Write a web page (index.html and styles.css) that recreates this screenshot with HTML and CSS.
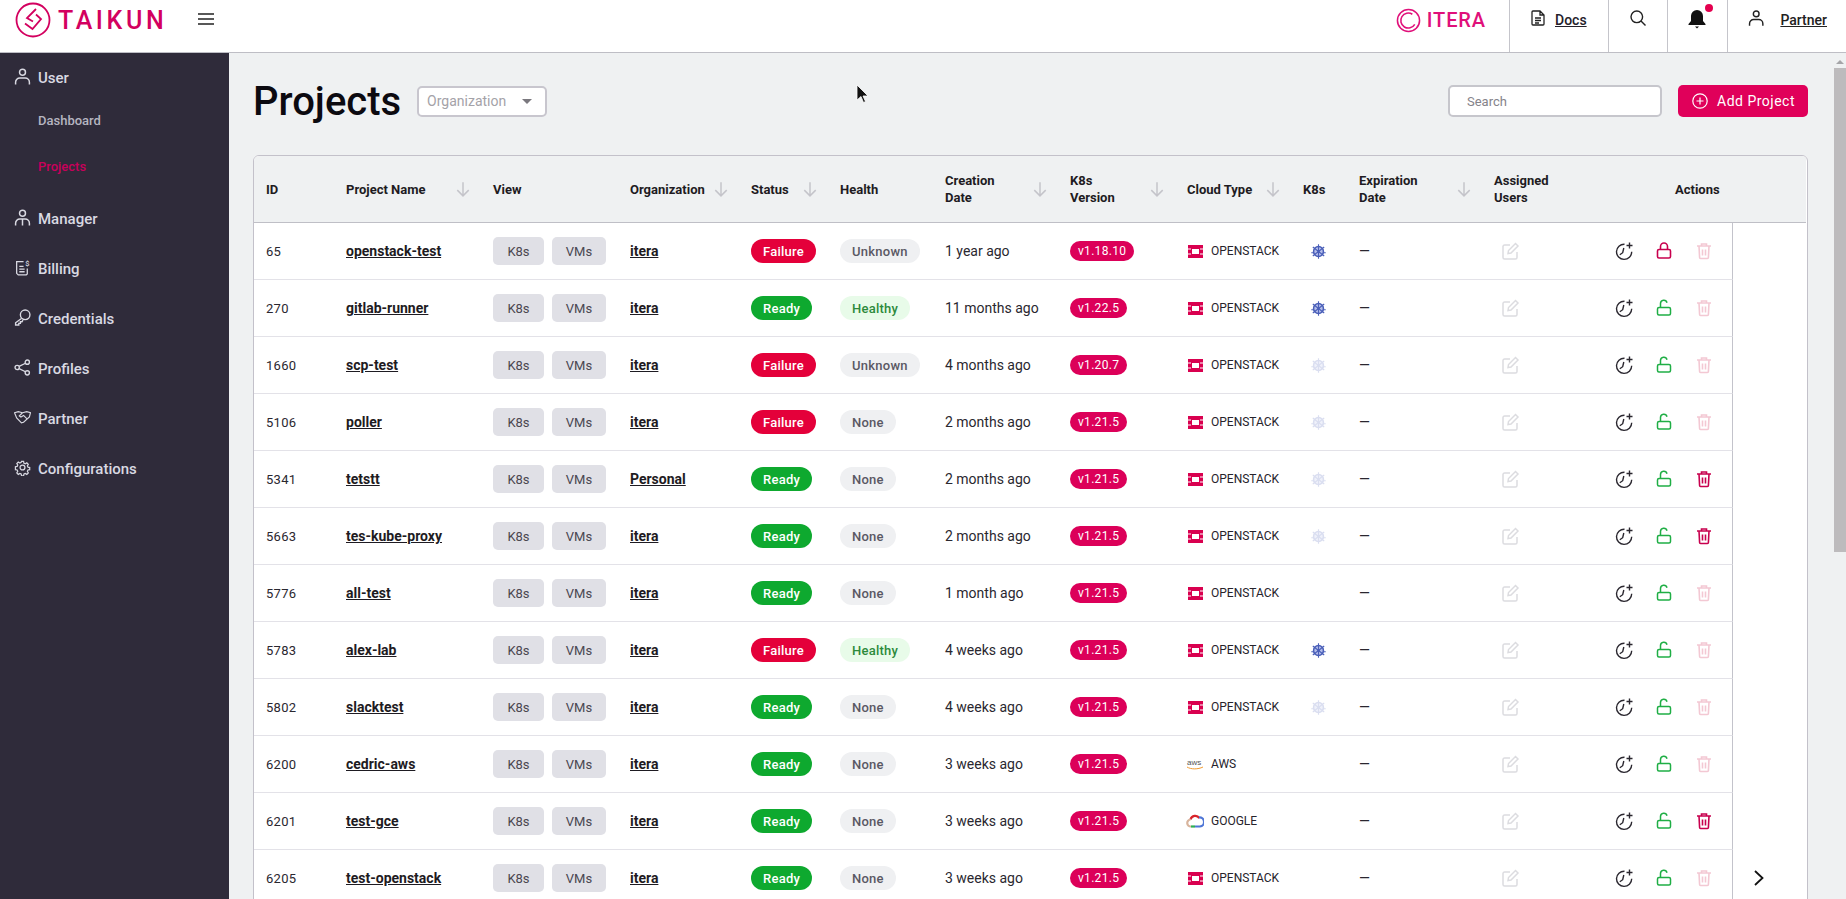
FILE: index.html
```html
<!DOCTYPE html>
<html lang="en">
<head>
    <meta charset="UTF-8">
    <title>Projects - Taikun</title>
    <link rel="stylesheet" href="styles.css">
</head>
<body>
    <!-- shared icons -->
    <svg class="defs" width="0" height="0">
        <symbol id="i-arrow" viewBox="0 0 14 14"><path d="M7 1v12M2 8l5 5 5-5" fill="none" stroke="currentColor" stroke-width="1.300"/></symbol>
        <symbol id="i-clock" viewBox="0 0 20 20"><path d="M10.5 3.2a7.6 7.6 0 1 0 7.2 7.6M9.8 7 8.7 11.7 5.8 13.8" fill="none" stroke="currentColor" stroke-width="1.4"/><path d="M15.5 1.5v6M12.5 4.500h6" fill="none" stroke="currentColor" stroke-width="1.4"/></symbol>
        <symbol id="i-lock" viewBox="0 0 20 20"><rect x="3.500" y="8.500" width="13" height="8.500" rx="1.500" fill="none" stroke="currentColor" stroke-width="1.600"/><path d="M6.500 8.500V5.500a3.500 3.500 0 0 1 7 0v3" fill="none" stroke="currentColor" stroke-width="1.600"/></symbol>
        <symbol id="i-unlock" viewBox="0 0 20 20"><rect x="3.500" y="9.500" width="13" height="7.500" rx="1.500" fill="none" stroke="currentColor" stroke-width="1.500"/><path d="M6.500 9.500V5.500a3.300 3.300 0 0 1 6.500-.8" fill="none" stroke="currentColor" stroke-width="1.500"/></symbol>
        <symbol id="i-trash" viewBox="0 0 20 20"><path d="M3 5h14M7.500 5V3h5v2M5 5l.6 11.500a1 1 0 0 0 1 1h6.800a1 1 0 0 0 1-1L15 5M8.500 8.500v6M11.500 8.500v6" fill="none" stroke="currentColor" stroke-width="1.600"/></symbol>
        <symbol id="i-edit" viewBox="0 0 20 20"><path d="M10 4H4.500A1.500 1.500 0 0 0 3 5.500v11A1.500 1.500 0 0 0 4.500 18h11a1.500 1.500 0 0 0 1.500-1.500V11" fill="none" stroke="currentColor" stroke-width="1.500"/><path d="M8 12.500 8.500 9.500 15.500 2.500 18 5 11 12z" fill="none" stroke="currentColor" stroke-width="1.500"/></symbol>
        <symbol id="i-k8s" viewBox="0 0 20 20"><circle cx="10" cy="10" r="5.800" fill="#b4bdea" stroke="#4a5fb8" stroke-width="1.800"/><path d="M10 1.500V18.500M3.300 4.700 16.700 15.300M16.700 4.700 3.300 15.300M1.500 11.500H4.500M15.500 11.500H18.500" stroke="#4a5fb8" stroke-width="1.300"/><circle cx="10" cy="10" r="1.500" fill="#4a5fb8"/></symbol>
        <symbol id="i-openstack" viewBox="0 0 15 13"><path d="M0 0h15v13H0z" fill="#d9004f"/><path d="M4 4h7v5H4z" fill="#fff"/><path d="M0 3.500h3v1H0zM12 3.500h3v1h-3zM0 8.500h3v1H0zM12 8.500h3v1h-3z" fill="#fff"/></symbol>
        <symbol id="i-user" viewBox="0 0 16 16"><circle cx="8" cy="4" r="2.800" fill="none" stroke="currentColor" stroke-width="1.400"/><path d="M1.500 15.500v-2a4 4 0 0 1 4-4h5a4 4 0 0 1 4 4v2" fill="none" stroke="currentColor" stroke-width="1.400"/></symbol>
    </svg>

    <header class="topbar">
        <div class="brand">
            <svg class="brand-mark" viewBox="0 0 36 36" width="36" height="36">
                <circle cx="18" cy="18" r="16.500" fill="none" stroke="#d3005f" stroke-width="1.800"/>
                <path d="M21 7 12 16 18 19.500M10 21.500 17.500 27 26 17 21 12.500" fill="none" stroke="#d3005f" stroke-width="1.800"/>
            </svg>
            <span class="brand-name">TAIKUN</span>
        </div>
        <button class="menu-btn" type="button" aria-label="Menu">
            <svg viewBox="0 0 16 12" width="16" height="12"><path d="M0 1h16M0 6h16M0 11h16" stroke="#222" stroke-width="1.500"/></svg>
        </button>
        <div class="topbar-right">
            <div class="partner-logo">
                <svg viewBox="0 0 26 26" width="25" height="25">
                    <circle cx="13" cy="13" r="11.500" fill="none" stroke="#e0107a" stroke-width="1.600"/>
                    <path d="M17 6.500a7.800 7.800 0 1 0 2.500 10.500" fill="none" stroke="#e0107a" stroke-width="1.600"/>
                </svg>
                <span class="partner-name">ITERA</span>
            </div>
            <div class="top-cell cell-docs">
                <svg viewBox="0 0 14 16" width="14" height="16"><path d="M1 2a1 1 0 0 1 1-1h7l4 4v9a1 1 0 0 1-1 1H2a1 1 0 0 1-1-1zM9 1v4h4M4 8h6M4 10.500h6M4 13h4" fill="none" stroke="#222" stroke-width="1.300"/></svg>
                <a href="#">Docs</a>
            </div>
            <div class="top-cell cell-search">
                <svg viewBox="0 0 16 16" width="16" height="16"><circle cx="6.800" cy="6.800" r="5.800" fill="none" stroke="#222" stroke-width="1.400"/><path d="M11 11l4.500 4.500" stroke="#222" stroke-width="1.400"/></svg>
            </div>
            <div class="top-cell cell-bell">
                <svg viewBox="0 0 18 19" width="18" height="19"><path d="M9 0a6 6 0 0 1 6 6v5l2.500 3v1H.5v-1L3 11V6a6 6 0 0 1 6-6zM7 16.500h4L9 18.500z" fill="#111"/></svg>
                <span class="bell-dot"></span>
            </div>
            <div class="top-cell cell-user">
                <svg class="top-user" width="18" height="18"><use href="#i-user"/></svg>
                <a href="#">Partner</a>
            </div>
        </div>
    </header>

    <div class="layout">
        <nav class="sidebar">
            <a class="nav-head" href="#"><svg class="nav-icon" width="17" height="17"><use href="#i-user"/></svg>User</a>
            <div class="nav-sub">
                <a href="#">Dashboard</a>
                <a class="active" href="#">Projects</a>
            </div>
            <a class="nav-head" href="#">
                <svg class="nav-icon" viewBox="0 0 16 16" width="17" height="17"><circle cx="8" cy="4" r="2.800" fill="none" stroke="currentColor" stroke-width="1.400"/><path d="M1.500 15.500v-2a4 4 0 0 1 4-4h5a4 4 0 0 1 4 4v2M8 9.500v6" fill="none" stroke="currentColor" stroke-width="1.400"/></svg>Manager</a>
            <a class="nav-head" href="#">
                <svg class="nav-icon" viewBox="0 0 16 16" width="17" height="17"><path d="M9 2.500H2.500v11l1.500 1.500h7.500l1-1V9M5 7h4M5 9.500h5M5 12h5" fill="none" stroke="currentColor" stroke-width="1.200"/><text x="10.500" y="6.500" class="nav-dollar">$</text></svg>Billing</a>
            <a class="nav-head" href="#">
                <svg class="nav-icon" viewBox="0 0 16 16" width="17" height="17"><circle cx="10.500" cy="5.500" r="4.500" fill="none" stroke="currentColor" stroke-width="1.300"/><path d="M7 9 1.500 13v2h3v-1.500H6V12h1.500l1-1.500" fill="none" stroke="currentColor" stroke-width="1.300"/></svg>Credentials</a>
            <a class="nav-head" href="#">
                <svg class="nav-icon" viewBox="0 0 16 16" width="17" height="17"><circle cx="3" cy="8" r="2" fill="none" stroke="currentColor" stroke-width="1.300"/><circle cx="12.500" cy="3" r="2" fill="none" stroke="currentColor" stroke-width="1.300"/><circle cx="12.500" cy="13" r="2" fill="none" stroke="currentColor" stroke-width="1.300"/><path d="M4.800 7l6-3M4.800 9l6 3" stroke="currentColor" stroke-width="1.300"/></svg>Profiles</a>
            <a class="nav-head" href="#">
                <svg class="nav-icon" viewBox="0 0 16 16" width="17" height="17"><path d="M.5 3.500 4 2.500l4 1 4-1 3.500 1-1 4-5.500 5-2 .5-4.500-4.500zM8 3.500 5 6.500l1.500 1L9 6l3.500 3.500" fill="none" stroke="currentColor" stroke-width="1.100"/></svg>Partner</a>
            <a class="nav-head" href="#">
                <svg class="nav-icon" viewBox="0 0 16 16" width="17" height="17"><circle cx="8" cy="8" r="2.300" fill="none" stroke="currentColor" stroke-width="1.200"/><path d="M6.800 1h2.400l.4 2 1.500.7 1.800-1.100 1.700 1.700-1.100 1.800.7 1.500 2 .4v2.400l-2 .4-.7 1.500 1.100 1.800-1.700 1.700-1.800-1.100-1.500.7-.4 2H6.800l-.4-2-1.500-.7-1.800 1.100-1.700-1.700 1.100-1.800-.7-1.500-2-.4V7l2-.4.7-1.500-1.100-1.800 1.700-1.700 1.800 1.100 1.500-.7z" transform="translate(1.500 1.500) scale(.82)" fill="none" stroke="currentColor" stroke-width="1.400"/></svg>Configurations</a>
        </nav>

        <main class="content">
            <div class="toolbar">
                <h1>Projects</h1>
                <div class="org-select">Organization<span class="caret"></span></div>
                <input class="search" type="text" placeholder="Search">
                <button class="add-btn" type="button">
                    <svg viewBox="0 0 16 16" width="16" height="16"><circle cx="8" cy="8" r="7.200" fill="none" stroke="#fff" stroke-width="1.200"/><path d="M8 4.500v7M4.500 8h7" stroke="#fff" stroke-width="1.200"/></svg>
                    Add Project
                </button>
            </div>

            <div class="table-wrap">
                <table class="projects">
                    <colgroup>
                        <col class="c-id"><col class="c-name"><col class="c-view"><col class="c-org"><col class="c-status"><col class="c-health"><col class="c-date"><col class="c-ver"><col class="c-cloud"><col class="c-k8s"><col class="c-exp"><col class="c-users"><col class="c-actions"><col class="c-end">
                    </colgroup>
                    <thead>
                        <tr>
                            <th>ID</th>
                            <th><div class="th-sort"><span>Project Name</span><svg width="16" height="16"><use href="#i-arrow"/></svg></div></th>
                            <th>View</th>
                            <th><div class="th-sort"><span>Organization</span><svg width="16" height="16"><use href="#i-arrow"/></svg></div></th>
                            <th><div class="th-sort"><span>Status</span><svg width="16" height="16"><use href="#i-arrow"/></svg></div></th>
                            <th>Health</th>
                            <th><div class="th-sort"><span>Creation<br>Date</span><svg width="16" height="16"><use href="#i-arrow"/></svg></div></th>
                            <th><div class="th-sort"><span>K8s<br>Version</span><svg width="16" height="16"><use href="#i-arrow"/></svg></div></th>
                            <th><div class="th-sort"><span>Cloud Type</span><svg width="16" height="16"><use href="#i-arrow"/></svg></div></th>
                            <th>K8s</th>
                            <th><div class="th-sort"><span>Expiration<br>Date</span><svg width="16" height="16"><use href="#i-arrow"/></svg></div></th>
                            <th>Assigned<br>Users</th>
                            <th class="th-actions" colspan="2">Actions</th>
                        </tr>
                    </thead>
                    <tbody>
                        <tr>
                            <td class="id">65</td><td><a href="#">openstack-test</a></td>
                            <td><div class="views"><span>K8s</span><span>VMs</span></div></td>
                            <td><a href="#">itera</a></td><td><span class="pill failure">Failure</span></td><td><span class="pill muted">Unknown</span></td>
                            <td>1 year ago</td><td><span class="ver">v1.18.10</span></td>
                            <td><div class="cloud"><svg width="15" height="13"><use href="#i-openstack"/></svg>OPENSTACK</div></td>
                            <td><svg class="k8s" width="17" height="17"><use href="#i-k8s"/></svg></td><td>—</td>
                            <td><svg class="edit" width="20" height="20"><use href="#i-edit"/></svg></td>
                            <td class="actions"><div class="acts"><svg class="a-clock"><use href="#i-clock"/></svg><svg class="a-red"><use href="#i-lock"/></svg><svg class="a-faint"><use href="#i-trash"/></svg></div></td>
                            <td class="end"></td>
                        </tr>
                        <tr>
                            <td class="id">270</td><td><a href="#">gitlab-runner</a></td>
                            <td><div class="views"><span>K8s</span><span>VMs</span></div></td>
                            <td><a href="#">itera</a></td><td><span class="pill ready">Ready</span></td><td><span class="pill healthy">Healthy</span></td>
                            <td>11 months ago</td><td><span class="ver">v1.22.5</span></td>
                            <td><div class="cloud"><svg width="15" height="13"><use href="#i-openstack"/></svg>OPENSTACK</div></td>
                            <td><svg class="k8s" width="17" height="17"><use href="#i-k8s"/></svg></td><td>—</td>
                            <td><svg class="edit" width="20" height="20"><use href="#i-edit"/></svg></td>
                            <td class="actions"><div class="acts"><svg class="a-clock"><use href="#i-clock"/></svg><svg class="a-green"><use href="#i-unlock"/></svg><svg class="a-faint"><use href="#i-trash"/></svg></div></td>
                            <td class="end"></td>
                        </tr>
                        <tr>
                            <td class="id">1660</td><td><a href="#">scp-test</a></td>
                            <td><div class="views"><span>K8s</span><span>VMs</span></div></td>
                            <td><a href="#">itera</a></td><td><span class="pill failure">Failure</span></td><td><span class="pill muted">Unknown</span></td>
                            <td>4 months ago</td><td><span class="ver">v1.20.7</span></td>
                            <td><div class="cloud"><svg width="15" height="13"><use href="#i-openstack"/></svg>OPENSTACK</div></td>
                            <td><svg class="k8s off" width="17" height="17"><use href="#i-k8s"/></svg></td><td>—</td>
                            <td><svg class="edit" width="20" height="20"><use href="#i-edit"/></svg></td>
                            <td class="actions"><div class="acts"><svg class="a-clock"><use href="#i-clock"/></svg><svg class="a-green"><use href="#i-unlock"/></svg><svg class="a-faint"><use href="#i-trash"/></svg></div></td>
                            <td class="end"></td>
                        </tr>
                        <tr>
                            <td class="id">5106</td><td><a href="#">poller</a></td>
                            <td><div class="views"><span>K8s</span><span>VMs</span></div></td>
                            <td><a href="#">itera</a></td><td><span class="pill failure">Failure</span></td><td><span class="pill muted">None</span></td>
                            <td>2 months ago</td><td><span class="ver">v1.21.5</span></td>
                            <td><div class="cloud"><svg width="15" height="13"><use href="#i-openstack"/></svg>OPENSTACK</div></td>
                            <td><svg class="k8s off" width="17" height="17"><use href="#i-k8s"/></svg></td><td>—</td>
                            <td><svg class="edit" width="20" height="20"><use href="#i-edit"/></svg></td>
                            <td class="actions"><div class="acts"><svg class="a-clock"><use href="#i-clock"/></svg><svg class="a-green"><use href="#i-unlock"/></svg><svg class="a-faint"><use href="#i-trash"/></svg></div></td>
                            <td class="end"></td>
                        </tr>
                        <tr>
                            <td class="id">5341</td><td><a href="#">tetstt</a></td>
                            <td><div class="views"><span>K8s</span><span>VMs</span></div></td>
                            <td><a href="#">Personal</a></td><td><span class="pill ready">Ready</span></td><td><span class="pill muted">None</span></td>
                            <td>2 months ago</td><td><span class="ver">v1.21.5</span></td>
                            <td><div class="cloud"><svg width="15" height="13"><use href="#i-openstack"/></svg>OPENSTACK</div></td>
                            <td><svg class="k8s off" width="17" height="17"><use href="#i-k8s"/></svg></td><td>—</td>
                            <td><svg class="edit" width="20" height="20"><use href="#i-edit"/></svg></td>
                            <td class="actions"><div class="acts"><svg class="a-clock"><use href="#i-clock"/></svg><svg class="a-green"><use href="#i-unlock"/></svg><svg class="a-red"><use href="#i-trash"/></svg></div></td>
                            <td class="end"></td>
                        </tr>
                        <tr>
                            <td class="id">5663</td><td><a href="#">tes-kube-proxy</a></td>
                            <td><div class="views"><span>K8s</span><span>VMs</span></div></td>
                            <td><a href="#">itera</a></td><td><span class="pill ready">Ready</span></td><td><span class="pill muted">None</span></td>
                            <td>2 months ago</td><td><span class="ver">v1.21.5</span></td>
                            <td><div class="cloud"><svg width="15" height="13"><use href="#i-openstack"/></svg>OPENSTACK</div></td>
                            <td><svg class="k8s off" width="17" height="17"><use href="#i-k8s"/></svg></td><td>—</td>
                            <td><svg class="edit" width="20" height="20"><use href="#i-edit"/></svg></td>
                            <td class="actions"><div class="acts"><svg class="a-clock"><use href="#i-clock"/></svg><svg class="a-green"><use href="#i-unlock"/></svg><svg class="a-red"><use href="#i-trash"/></svg></div></td>
                            <td class="end"></td>
                        </tr>
                        <tr>
                            <td class="id">5776</td><td><a href="#">all-test</a></td>
                            <td><div class="views"><span>K8s</span><span>VMs</span></div></td>
                            <td><a href="#">itera</a></td><td><span class="pill ready">Ready</span></td><td><span class="pill muted">None</span></td>
                            <td>1 month ago</td><td><span class="ver">v1.21.5</span></td>
                            <td><div class="cloud"><svg width="15" height="13"><use href="#i-openstack"/></svg>OPENSTACK</div></td>
                            <td></td><td>—</td>
                            <td><svg class="edit" width="20" height="20"><use href="#i-edit"/></svg></td>
                            <td class="actions"><div class="acts"><svg class="a-clock"><use href="#i-clock"/></svg><svg class="a-green"><use href="#i-unlock"/></svg><svg class="a-faint"><use href="#i-trash"/></svg></div></td>
                            <td class="end"></td>
                        </tr>
                        <tr>
                            <td class="id">5783</td><td><a href="#">alex-lab</a></td>
                            <td><div class="views"><span>K8s</span><span>VMs</span></div></td>
                            <td><a href="#">itera</a></td><td><span class="pill failure">Failure</span></td><td><span class="pill healthy">Healthy</span></td>
                            <td>4 weeks ago</td><td><span class="ver">v1.21.5</span></td>
                            <td><div class="cloud"><svg width="15" height="13"><use href="#i-openstack"/></svg>OPENSTACK</div></td>
                            <td><svg class="k8s" width="17" height="17"><use href="#i-k8s"/></svg></td><td>—</td>
                            <td><svg class="edit" width="20" height="20"><use href="#i-edit"/></svg></td>
                            <td class="actions"><div class="acts"><svg class="a-clock"><use href="#i-clock"/></svg><svg class="a-green"><use href="#i-unlock"/></svg><svg class="a-faint"><use href="#i-trash"/></svg></div></td>
                            <td class="end"></td>
                        </tr>
                        <tr>
                            <td class="id">5802</td><td><a href="#">slacktest</a></td>
                            <td><div class="views"><span>K8s</span><span>VMs</span></div></td>
                            <td><a href="#">itera</a></td><td><span class="pill ready">Ready</span></td><td><span class="pill muted">None</span></td>
                            <td>4 weeks ago</td><td><span class="ver">v1.21.5</span></td>
                            <td><div class="cloud"><svg width="15" height="13"><use href="#i-openstack"/></svg>OPENSTACK</div></td>
                            <td><svg class="k8s off" width="17" height="17"><use href="#i-k8s"/></svg></td><td>—</td>
                            <td><svg class="edit" width="20" height="20"><use href="#i-edit"/></svg></td>
                            <td class="actions"><div class="acts"><svg class="a-clock"><use href="#i-clock"/></svg><svg class="a-green"><use href="#i-unlock"/></svg><svg class="a-faint"><use href="#i-trash"/></svg></div></td>
                            <td class="end"></td>
                        </tr>
                        <tr>
                            <td class="id">6200</td><td><a href="#">cedric-aws</a></td>
                            <td><div class="views"><span>K8s</span><span>VMs</span></div></td>
                            <td><a href="#">itera</a></td><td><span class="pill ready">Ready</span></td><td><span class="pill muted">None</span></td>
                            <td>3 weeks ago</td><td><span class="ver">v1.21.5</span></td>
                            <td><div class="cloud"><svg class="aws" viewBox="0 0 18 14" width="18" height="14"><text x="1" y="8" class="aws-text">aws</text><path d="M1 10c4 2.500 11 2.500 16 0" fill="none" stroke="#f29a2e" stroke-width="1"/></svg>AWS</div></td>
                            <td></td><td>—</td>
                            <td><svg class="edit" width="20" height="20"><use href="#i-edit"/></svg></td>
                            <td class="actions"><div class="acts"><svg class="a-clock"><use href="#i-clock"/></svg><svg class="a-green"><use href="#i-unlock"/></svg><svg class="a-faint"><use href="#i-trash"/></svg></div></td>
                            <td class="end"></td>
                        </tr>
                        <tr>
                            <td class="id">6201</td><td><a href="#">test-gce</a></td>
                            <td><div class="views"><span>K8s</span><span>VMs</span></div></td>
                            <td><a href="#">itera</a></td><td><span class="pill ready">Ready</span></td><td><span class="pill muted">None</span></td>
                            <td>3 weeks ago</td><td><span class="ver">v1.21.5</span></td>
                            <td><div class="cloud"><svg class="gcp" viewBox="0 0 18 14" width="18" height="14"><path d="M4.500 5.500a4.800 4.800 0 0 1 8.800-1.300" fill="none" stroke="#d8232a" stroke-width="2.200"/><path d="M13 3.500a4 4 0 0 1 1 9H9" fill="none" stroke="#4f76d6" stroke-width="2.200"/><path d="M9 12.500H5" fill="none" stroke="#2eae54" stroke-width="2.200"/><path d="M5 12.500a3.500 3.500 0 0 1-.5-7" fill="none" stroke="#d8b49c" stroke-width="2.200"/></svg>GOOGLE</div></td>
                            <td></td><td>—</td>
                            <td><svg class="edit" width="20" height="20"><use href="#i-edit"/></svg></td>
                            <td class="actions"><div class="acts"><svg class="a-clock"><use href="#i-clock"/></svg><svg class="a-green"><use href="#i-unlock"/></svg><svg class="a-red"><use href="#i-trash"/></svg></div></td>
                            <td class="end"></td>
                        </tr>
                        <tr>
                            <td class="id">6205</td><td><a href="#">test-openstack</a></td>
                            <td><div class="views"><span>K8s</span><span>VMs</span></div></td>
                            <td><a href="#">itera</a></td><td><span class="pill ready">Ready</span></td><td><span class="pill muted">None</span></td>
                            <td>3 weeks ago</td><td><span class="ver">v1.21.5</span></td>
                            <td><div class="cloud"><svg width="15" height="13"><use href="#i-openstack"/></svg>OPENSTACK</div></td>
                            <td></td><td>—</td>
                            <td><svg class="edit" width="20" height="20"><use href="#i-edit"/></svg></td>
                            <td class="actions"><div class="acts"><svg class="a-clock"><use href="#i-clock"/></svg><svg class="a-green"><use href="#i-unlock"/></svg><svg class="a-faint"><use href="#i-trash"/></svg></div></td>
                            <td class="end"><svg class="chevron" viewBox="0 0 10 16" width="10" height="16"><path d="M1 1l7.500 7L1 15" fill="none" stroke="#111" stroke-width="1.800"/></svg></td>
                        </tr>
                    </tbody>
                </table>
            </div>
        </main>

        <div class="scrollbar">
            <span class="scroll-up"></span>
            <span class="scroll-thumb"></span>
        </div>
    </div>

    <!-- mouse pointer caught in the shot -->
    <svg class="pointer" viewBox="0 0 12 20" width="12" height="20"><path d="M1 1v15l4-3.500 2.500 6 2-1-2.500-5.500h5z" fill="#111" stroke="#fff" stroke-width=".8"/></svg>
</body>
</html>
```

FILE: styles.css
```css
* {
    box-sizing: border-box;
}

html, body {
    height: 100%;
}

body {
    margin: 0;
    overflow: hidden;
    font-family: Roboto, "Liberation Sans", sans-serif;
    color: #24212a;
    background-color: #eff1f2;
}

.defs {
    position: absolute;
}

a {
    color: inherit;
}

/* Top bar */
.topbar {
    display: flex;
    height: 53px;
    background-color: #fff;
    border-bottom: 1px solid #bebec5;
}

.brand {
    display: flex;
    align-items: center;
    gap: 7px;
    width: 198px;
    height: 40px;
    padding-left: 15px;
}

.brand-mark {
    flex: none;
}

.brand-name {
    font-size: 25px;
    font-weight: 500;
    letter-spacing: 3.6px;
    color: #d3005f;
}

.menu-btn {
    width: 16px;
    height: 12px;
    margin-top: 13px;
    padding: 0;
    border: none;
    background: none;
    line-height: 0;
}

.topbar-right {
    display: flex;
    margin-left: auto;
    padding-right: 19px;
}

.partner-logo {
    display: flex;
    align-items: center;
    gap: 6px;
    height: 40px;
    margin-right: 23px;
}

.partner-name {
    font-size: 20px;
    font-weight: 500;
    letter-spacing: 0.9px;
    color: #e0107a;
}

.top-cell {
    position: relative;
    display: flex;
    align-items: flex-start;
    padding-top: 10px;
    border-left: 1px solid #c5c5cb;
    font-size: 14px;
    font-weight: 500;
}

.top-cell a {
    line-height: 20px;
}

.cell-docs {
    width: 99px;
    gap: 10px;
    padding-left: 21px;
}

.cell-search {
    width: 59px;
    padding-left: 21px;
}

.cell-bell {
    width: 60px;
    padding-left: 20px;
}

.bell-dot {
    position: absolute;
    top: 4px;
    left: 37px;
    width: 8px;
    height: 8px;
    border-radius: 50%;
    background-color: #e4004f;
}

.cell-user {
    width: 100px;
    gap: 16px;
    padding-left: 20px;
    color: #222;
}

.top-user {
    margin-top: -1px;
}

/* Sidebar */
.layout {
    display: flex;
    height: calc(100vh - 53px);
}

.sidebar {
    flex: none;
    width: 229px;
    padding-top: 4px;
    background-color: #2f2b3a;
    color: #d9d9e2;
}

.nav-head {
    display: flex;
    align-items: center;
    gap: 7px;
    height: 40px;
    margin-bottom: 10px;
    padding-left: 14px;
    font-size: 15px;
    font-weight: 500;
    text-decoration: none;
}

.sidebar > .nav-head:first-child {
    margin-bottom: 0;
    padding-top: 2px;
}

.nav-icon {
    flex: none;
    margin-top: -4px;
}

.nav-dollar {
    font-size: 7px;
    fill: currentColor;
}

.nav-sub {
    margin-bottom: 10px;
}

.nav-sub a {
    display: flex;
    align-items: center;
    height: 46px;
    padding-left: 38px;
    font-size: 13px;
    font-weight: 500;
    color: #b5b5c0;
    text-decoration: none;
}

.nav-sub a.active {
    color: #c8005a;
}

/* Main */
.content {
    flex: 1;
    min-width: 0;
    padding: 32px 26px 0 24px;
    overflow: hidden;
}

.toolbar {
    display: flex;
    align-items: center;
    height: 32px;
}

.toolbar h1 {
    margin: 0 16px 0 0;
    font-size: 40px;
    font-weight: 500;
    color: #0c0a10;
}

.org-select {
    display: flex;
    align-items: center;
    justify-content: space-between;
    width: 130px;
    height: 31px;
    padding: 0 13px 0 8px;
    border: 2px solid #c8c6ce;
    border-radius: 5px;
    background-color: #fff;
    font-size: 14px;
    color: #a4a2a8;
}

.caret {
    width: 0;
    height: 0;
    border-left: 5px solid transparent;
    border-right: 5px solid transparent;
    border-top: 5px solid #7a787e;
}

.search {
    width: 214px;
    height: 32px;
    margin-left: auto;
    padding: 0 17px;
    border: 2px solid #c6c6cc;
    border-radius: 5px;
    background-color: #fff;
    font-family: inherit;
    font-size: 13px;
    outline: none;
}

.search::placeholder {
    color: #85838a;
}

.add-btn {
    display: flex;
    align-items: center;
    gap: 9px;
    width: 130px;
    height: 32px;
    margin-left: 16px;
    padding: 0 0 0 14px;
    border: none;
    border-radius: 5px;
    background-color: #e0005a;
    color: #fff;
    font-family: inherit;
    font-size: 14px;
    letter-spacing: 0.5px;
}

/* Table */
.table-wrap {
    margin-top: 38px;
    border: 1px solid #c3c1ca;
    border-radius: 6px 6px 0 0;
    background-color: #fff;
    overflow: hidden;
}

.projects {
    width: 1552px;
    table-layout: fixed;
    border-collapse: separate;
    border-spacing: 0;
}

.c-id { width: 80px; }
.c-name { width: 147px; }
.c-view { width: 137px; }
.c-org { width: 121px; }
.c-status { width: 89px; }
.c-health { width: 105px; }
.c-date { width: 125px; }
.c-ver { width: 117px; }
.c-cloud { width: 116px; }
.c-k8s { width: 56px; }
.c-exp { width: 135px; }
.c-users { width: 130px; }
.c-actions { width: 121px; }
.c-end { width: 73px; }

.projects th {
    height: 67px;
    padding: 0 10px 0 12px;
    background-color: #eff1f2;
    border-bottom: 1px solid #bfbfc6;
    font-size: 13px;
    font-weight: 700;
    line-height: 17px;
    text-align: left;
    color: #1e1b22;
}

.th-sort {
    display: flex;
    align-items: center;
    justify-content: space-between;
}

.th-sort svg {
    flex: none;
    color: #c4c4ca;
}

.projects th.th-actions {
    padding-left: 63px;
}

.projects td {
    height: 57px;
    padding: 0 0 0 12px;
    border-bottom: 1px solid #e3e2e8;
    font-size: 14px;
    color: #2a272f;
    white-space: nowrap;
}

.projects td a {
    font-weight: 700;
    color: #1e1b22;
}

.projects td.id {
    font-size: 13px;
    letter-spacing: 0.3px;
}

.views {
    display: flex;
    gap: 8px;
}

.views span {
    display: flex;
    align-items: center;
    justify-content: center;
    width: 51px;
    height: 28px;
    border-radius: 5px;
    background-color: #e0e0e6;
    font-size: 13px;
    color: #4a4750;
}

.views span + span {
    width: 54px;
}

.pill {
    display: inline-block;
    height: 24px;
    padding: 0 12px;
    border-radius: 12px;
    font-size: 13px;
    font-weight: 500;
    letter-spacing: 0.25px;
    line-height: 25px;
    vertical-align: middle;
}

.failure {
    background-color: #e4003a;
    color: #fff;
}

.ready {
    background-color: #0ea92f;
    color: #fff;
}

.muted {
    background-color: #eff0f2;
    color: #5a5864;
}

.healthy {
    background-color: #e8fbe9;
    color: #2d8a3c;
}

.ver {
    display: inline-block;
    height: 20px;
    padding: 0 8px;
    border-radius: 10px;
    background-color: #dc0059;
    color: #fff;
    font-size: 12px;
    letter-spacing: 0.3px;
    line-height: 20px;
    vertical-align: middle;
}

.cloud {
    display: flex;
    align-items: center;
    gap: 8px;
    padding-left: 1px;
    font-size: 12px;
    color: #26232b;
}

.aws, .gcp {
    margin-left: -2px;
    margin-right: -1px;
}

.aws-text {
    font-family: "Liberation Sans", sans-serif;
    font-size: 8px;
    fill: #555;
}

.k8s {
    display: block;
    margin-left: 7px;
}

.k8s.off {
    opacity: 0.2;
}

.edit {
    display: block;
    margin-left: 6px;
    color: #dcdce0;
}

.projects td.actions {
    padding-left: 2px;
    border-right: 1px solid #c3c3cb;
}

.acts {
    display: flex;
    gap: 20px;
}

.acts svg {
    width: 20px;
    height: 20px;
}

.a-clock {
    color: #2a272f;
}

.a-red {
    color: #c8004e;
}

.a-green {
    color: #1fae45;
}

.a-faint {
    color: #f3c8d3;
}

.projects td.end {
    padding-left: 21px;
    border-bottom: none;
}

.chevron {
    display: block;
    margin-top: -1px;
}

/* Scrollbar */
.scrollbar {
    flex: none;
    display: flex;
    flex-direction: column;
    align-items: center;
    width: 12px;
    padding-top: 7px;
}

.scroll-up {
    width: 0;
    height: 0;
    border-left: 4px solid transparent;
    border-right: 4px solid transparent;
    border-bottom: 4px solid #a5a5a8;
}

.scroll-thumb {
    width: 12px;
    height: 484px;
    margin-top: 4px;
    background-color: #bdbbbd;
}

.pointer {
    position: absolute;
    left: 856px;
    top: 84px;
}
```
